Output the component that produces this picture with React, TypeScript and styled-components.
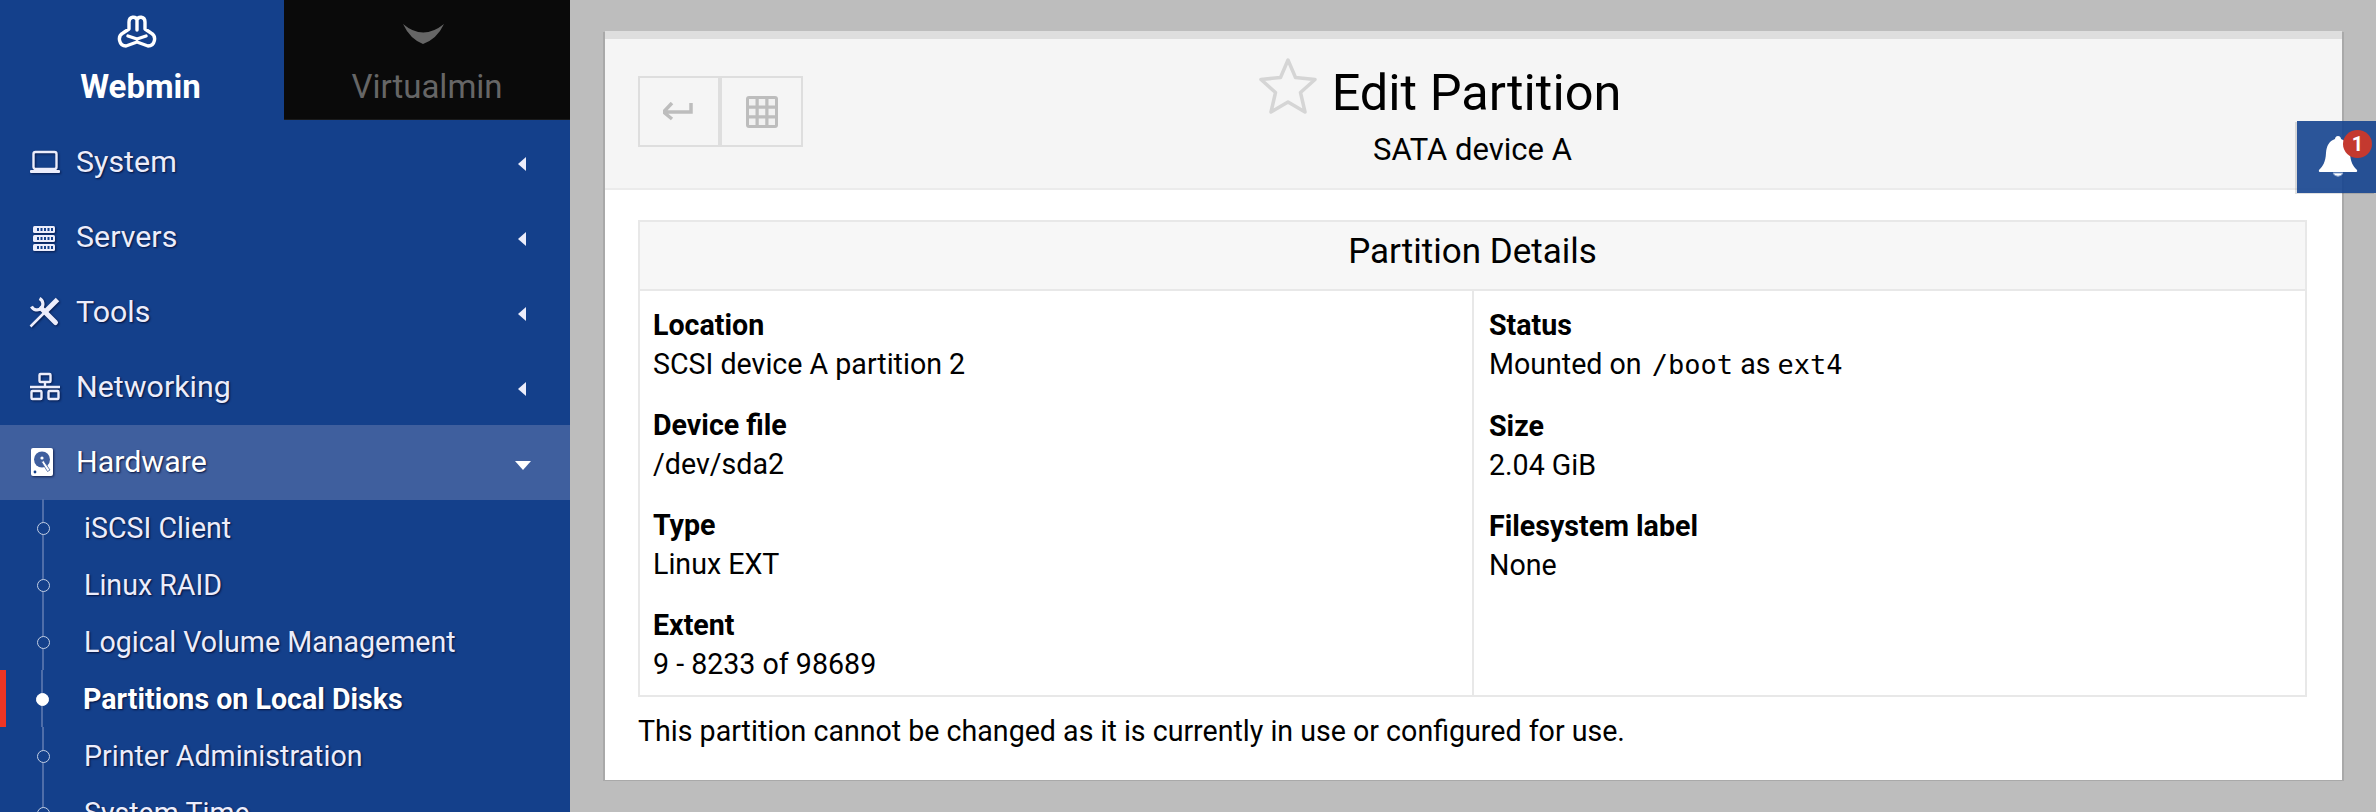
import styled, { createGlobalStyle } from "styled-components";
import { ReactNode } from "react";

const GlobalStyle = createGlobalStyle`
    html, body {
        margin: 0;
        height: 100%;
        background: #bdbdbd;
        overflow: hidden;
    }
    * {
        box-sizing: border-box;
    }
`;

const Page = styled.div`
    position: relative;
    display: flex;
    width: 2376px;
    height: 812px;
    overflow: hidden;
    background: #bdbdbd;
    font-family: Roboto, "Liberation Sans", sans-serif;
    color: #000;
`;

const Sidebar = styled.aside`
    flex: none;
    width: 570px;
    height: 812px;
    overflow: hidden;
    background: #14408b;
`;

const Tabs = styled.div`
    display: grid;
    grid-template-columns: 284px 286px;
    height: 120px;
    margin-bottom: 5px;
`;

const Tab = styled.div<{ $active?: boolean }>`
    display: flex;
    flex-direction: column;
    align-items: center;
    padding-top: 15px;
    padding-right: ${(p) => (p.$active ? "3px" : "0")};
    background: ${(p) => (p.$active ? "#14408b" : "#0a0a0a")};
    color: ${(p) => (p.$active ? "#fff" : "#666")};
    border-bottom: 1px solid ${(p) => (p.$active ? "#14408b" : "#1a1a1a")};
`;

const TabIcon = styled.svg`
    display: block;
    height: 34px;
    width: 42px;
    margin-right: 8px;
    margin-bottom: 20px;
`;

const TabLabel = styled.div<{ $active?: boolean }>`
    font-size: 33px;
    line-height: 36px;
    font-weight: ${(p) => (p.$active ? 700 : 400)};
`;

const MenuRow = styled.div<{ $open?: boolean }>`
    display: flex;
    align-items: center;
    height: 75px;
    padding-left: 29px;
    padding-bottom: 2px;
    background: ${(p) => (p.$open ? "#3f5f9e" : "transparent")};
    color: ${(p) => (p.$open ? "#fff" : "#ecedfb")};
    font-size: 30.4px;
    text-shadow: 1px 1px 2px rgba(0, 10, 50, 0.9);
`;

const MenuIcon = styled.svg`
    flex: none;
    width: 32px;
    height: 32px;
    margin-right: 15px;
    filter: drop-shadow(1px 1px 1px rgba(0, 10, 50, 0.7));
`;

const MenuLabel = styled.span`
    flex: 1;
`;

const CaretLeft = styled.span`
    width: 0;
    height: 0;
    margin-right: 44px;
    margin-top: 5px;
    border-top: 7px solid transparent;
    border-bottom: 7px solid transparent;
    border-right: 8px solid #ecedfb;
`;

const CaretDown = styled.span`
    width: 0;
    height: 0;
    margin-right: 39px;
    margin-top: 8px;
    border-left: 8px solid transparent;
    border-right: 8px solid transparent;
    border-top: 9px solid #fff;
`;

const SubList = styled.div`
    margin-top: -1px;
`;

const SubRow = styled.div<{ $active?: boolean }>`
    display: flex;
    align-items: center;
    height: 57px;
    padding-left: 37px;
    color: ${(p) => (p.$active ? "#fff" : "#ecedfb")};
    font-size: 28.6px;
    font-weight: ${(p) => (p.$active ? 700 : 400)};
    text-shadow: 1px 1px 2px rgba(0, 10, 50, 0.9);
    box-shadow: ${(p) => (p.$active ? "inset 6px 0 0 #ee3524" : "none")};
`;

const Bullet = styled.span<{ $active?: boolean }>`
    position: relative;
    flex: none;
    width: 11px;
    height: 57px;
    margin-right: 36px;
    margin-left: ${(p) => (p.$active ? "-1px" : "0")};

    &::before {
        content: "";
        position: absolute;
        left: 5px;
        top: 0;
        bottom: 0;
        width: 1.5px;
        background: #4f6ea9;
    }

    &::after {
        content: "";
        position: absolute;
        left: 0;
        top: 23px;
        width: 11px;
        height: 11px;
        border-radius: 50%;
        border: 1.5px solid ${(p) => (p.$active ? "#fff" : "#c3cfe4")};
        background: ${(p) => (p.$active ? "#fff" : "#14408b")};
    }
`;

const Main = styled.main`
    flex: 1;
    padding: 31px 34px 0 35px;
`;

const Panel = styled.section`
    height: 749px;
    background: #fff;
    border-top: 8px solid #dedede;
    box-shadow: -2px 1px 0 #a9a9a9, 2px 1px 0 #a9a9a9;
`;

const PanelHeader = styled.header`
    display: grid;
    grid-template-columns: 1fr auto 1fr;
    height: 151px;
    padding: 37px 35px 0 33px;
    background: #f5f5f5;
    border-bottom: 2px solid #ebebeb;
`;

const ButtonGroup = styled.div`
    display: flex;
    align-self: start;
    height: 71px;
`;

const HeaderButton = styled.div`
    display: flex;
    align-items: center;
    justify-content: center;
    width: 82px;
    height: 71px;
    border: 2px solid #dedede;
    & + & {
        width: 84px;
        margin-left: -1px;
        border-left-width: 3px;
    }
`;

const TitleBlock = styled.div`
    display: flex;
    flex-direction: column;
    align-items: center;
    padding-left: 8px;
    margin-top: -17px;
`;

const Heading = styled.h1`
    position: relative;
    margin: 0;
    font-size: 50.5px;
    line-height: 68px;
    font-weight: 400;
`;

const StarIcon = styled.svg`
    position: absolute;
    right: 100%;
    top: -4px;
    width: 62px;
    height: 62px;
    margin-right: 13px;
`;

const Subheading = styled.div`
    margin-top: 5px;
    margin-left: -8px;
    font-size: 31px;
    line-height: 36px;
`;

const PanelBody = styled.div`
    padding: 30px 35px 0 33px;
`;

const DetailsTable = styled.div`
    border: 2px solid #e8e8e8;
`;

const TableTitle = styled.div`
    height: 69px;
    line-height: 60px;
    text-align: center;
    font-size: 35px;
    background: #f7f7f7;
    border-bottom: 2px solid #e8e8e8;
`;

const Columns = styled.div`
    display: grid;
    grid-template-columns: 832px 1fr;
    height: 404px;
`;

const Column = styled.div`
    padding: 15px 14px 0 13px;
    & + & {
        padding-left: 15px;
        border-left: 2px solid #e8e8e8;
    }
`;

const Field = styled.div`
    margin-bottom: 22px;
    font-size: 28.6px;
    line-height: 40px;
    &:last-child {
        margin-bottom: 0;
    }
`;

const FieldLabel = styled.div`
    font-weight: 700;
    line-height: 38px;
`;

const Mono = styled.span`
    font-family: "DejaVu Sans Mono", "Liberation Mono", monospace;
    font-size: 27px;
    &:first-of-type {
        margin-left: 3px;
    }
`;

const Note = styled.p`
    margin: 14px 0 0;
    font-size: 28.6px;
    line-height: 40px;
`;

const Notifier = styled.div`
    position: absolute;
    top: 121px;
    right: 0;
    width: 79px;
    height: 72px;
    background: rgba(21, 68, 143, 0.9);
    box-shadow: -2px 1px 0 rgba(0, 0, 0, 0.12);
`;

const BellIcon = styled.svg`
    position: absolute;
    left: 21px;
    top: 14px;
    width: 40px;
    height: 43px;
`;

const Badge = styled.span`
    position: absolute;
    left: 46px;
    top: 9px;
    width: 29px;
    height: 28px;
    border-radius: 50%;
    background: #c4392f;
    color: #fff;
    font-size: 20px;
    font-weight: 700;
    line-height: 28px;
    text-align: center;
`;

function LaptopIcon() {
    return (
        <MenuIcon viewBox="0 0 32 32">
            <rect x="4.5" y="6" width="23" height="17" rx="2" fill="none" stroke="currentColor" strokeWidth="2.4" />
            <rect x="1" y="24" width="30" height="3" rx="1" fill="currentColor" />
        </MenuIcon>
    );
}

function ServersIcon() {
    const rows = [5, 14, 23];
    const cells = [8, 11.5, 15, 18.5, 22];
    return (
        <MenuIcon viewBox="0 0 32 32">
            {rows.map((y) => (
                <g key={y}>
                    <rect x="4" y={y} width="22" height="7" rx="1.5" fill="currentColor" />
                    {cells.map((x) => (
                        <rect key={x} x={x} y={y + 2} width="2" height="3" fill="#14408b" />
                    ))}
                </g>
            ))}
        </MenuIcon>
    );
}

function ToolsIcon() {
    return (
        <MenuIcon viewBox="0 0 32 32">
            <g fill="none" stroke="currentColor">
                <path d="M1.5 30.5 L15 17" strokeWidth="2.5" />
                <path d="M15 17 L28.5 3.5" strokeWidth="5" />
                <path d="M10.5 2.5 A6 6 0 1 1 2.5 10.5" strokeWidth="3.2" />
                <path d="M12.5 12.5 L26.5 26.5" strokeWidth="5" strokeLinecap="round" />
            </g>
        </MenuIcon>
    );
}

function NetworkIcon() {
    return (
        <MenuIcon viewBox="0 0 32 32">
            <g fill="none" stroke="currentColor" strokeWidth="2.4">
                <rect x="10.5" y="3" width="11" height="8" rx="1" />
                <rect x="2.5" y="20" width="10" height="8" rx="1" />
                <rect x="19.5" y="20" width="10" height="8" rx="1" />
                <path d="M16 11 V16 M1 16 H31" />
            </g>
        </MenuIcon>
    );
}

function DiskIcon() {
    return (
        <MenuIcon viewBox="0 0 32 32">
            <rect x="2" y="2" width="22" height="28" rx="2" fill="currentColor" />
            <circle cx="13" cy="13.5" r="8" fill="#3f5f9e" />
            <circle cx="13" cy="12" r="1.6" fill="#fff" />
            <path d="M12.5 16 L14.5 14.5 L21 24 L18.5 25.5 Z" fill="#fff" stroke="#3f5f9e" strokeWidth="0.8" />
            <circle cx="6" cy="26" r="1.4" fill="#14408b" />
        </MenuIcon>
    );
}

function MenuItem({ icon, label, open }: { icon: ReactNode; label: string; open?: boolean }) {
    return (
        <MenuRow $open={open}>
            {icon}
            <MenuLabel>{label}</MenuLabel>
            {open ? <CaretDown /> : <CaretLeft />}
        </MenuRow>
    );
}

const subItems = [
    "iSCSI Client",
    "Linux RAID",
    "Logical Volume Management",
    "Partitions on Local Disks",
    "Printer Administration",
    "System Time",
];

const leftFields: [string, ReactNode][] = [
    ["Location", "SCSI device A partition 2"],
    ["Device file", "/dev/sda2"],
    ["Type", "Linux EXT"],
    ["Extent", "9 - 8233 of 98689"],
];

const rightFields: [string, ReactNode][] = [
    [
        "Status",
        <>
            Mounted on <Mono>/boot</Mono> as <Mono>ext4</Mono>
        </>,
    ],
    ["Size", "2.04 GiB"],
    ["Filesystem label", "None"],
];

function App() {
    return (
        <Page>
            <GlobalStyle />
            <Sidebar>
                <Tabs>
                    <Tab $active>
                        <TabIcon viewBox="0 0 42 34">
                            <path
                                d="M13 14 V7 C13 1 20 1 21 5 C22 1 29 1 29 7 V14 L35 18 C41 21 39 31 32 31 L21 27 L10 31 C3 31 1 21 7 18 Z M21 6 V15 M12 21 L21 24 L30 21"
                                fill="none"
                                stroke="#fff"
                                strokeWidth="3.4"
                                strokeLinejoin="round"
                                strokeLinecap="round"
                            />
                        </TabIcon>
                        <TabLabel $active>Webmin</TabLabel>
                    </Tab>
                    <Tab>
                        <TabIcon viewBox="0 0 42 34">
                            <path d="M1 9 Q21 26 42 9 Q35 24 21 29 Q8 24 1 9 Z" fill="#666" />
                        </TabIcon>
                        <TabLabel>Virtualmin</TabLabel>
                    </Tab>
                </Tabs>
                <MenuItem icon={<LaptopIcon />} label="System" />
                <MenuItem icon={<ServersIcon />} label="Servers" />
                <MenuItem icon={<ToolsIcon />} label="Tools" />
                <MenuItem icon={<NetworkIcon />} label="Networking" />
                <MenuItem icon={<DiskIcon />} label="Hardware" open />
                <SubList>
                    {subItems.map((item) => {
                        const active = item === "Partitions on Local Disks";
                        return (
                            <SubRow key={item} $active={active}>
                                <Bullet $active={active} />
                                {item}
                            </SubRow>
                        );
                    })}
                </SubList>
            </Sidebar>
            <Main>
                <Panel>
                    <PanelHeader>
                        <ButtonGroup>
                            <HeaderButton>
                                <svg width="32" height="20" viewBox="2 1 32 20" fill="none" stroke="#bdbdbd" strokeWidth="3.5">
                                    <path d="M30 2 V11 H3 M11 2 L2.5 11 L11 18" />
                                </svg>
                            </HeaderButton>
                            <HeaderButton>
                                <svg width="32" height="32" viewBox="0 0 32 32">
                                    <rect width="32" height="32" rx="3" fill="#bdbdbd" />
                                    {[3, 12.75, 22.5].map((y) =>
                                        [3, 12.75, 22.5].map((x) => (
                                            <rect key={`${x}-${y}`} x={x} y={y} width="6.5" height="6.5" fill="#f1f1f1" />
                                        ))
                                    )}
                                </svg>
                            </HeaderButton>
                        </ButtonGroup>
                        <TitleBlock>
                            <Heading>
                                <StarIcon viewBox="0 0 62 62">
                                    <path
                                        d="M31 5 L38.5 22.5 L58 24.5 L43.5 37.5 L48 57 L31 47 L14 57 L18.5 37.5 L4 24.5 L23.5 22.5 Z"
                                        fill="none"
                                        stroke="#d5d5d5"
                                        strokeWidth="3.5"
                                        strokeLinejoin="round"
                                    />
                                </StarIcon>
                                Edit Partition
                            </Heading>
                            <Subheading>SATA device A</Subheading>
                        </TitleBlock>
                    </PanelHeader>
                    <PanelBody>
                        <DetailsTable>
                            <TableTitle>Partition Details</TableTitle>
                            <Columns>
                                <Column>
                                    {leftFields.map(([label, value]) => (
                                        <Field key={label}>
                                            <FieldLabel>{label}</FieldLabel>
                                            {value}
                                        </Field>
                                    ))}
                                </Column>
                                <Column>
                                    {rightFields.map(([label, value]) => (
                                        <Field key={label}>
                                            <FieldLabel>{label}</FieldLabel>
                                            {value}
                                        </Field>
                                    ))}
                                </Column>
                            </Columns>
                        </DetailsTable>
                        <Note>This partition cannot be changed as it is currently in use or configured for use.</Note>
                    </PanelBody>
                </Panel>
            </Main>
            <Notifier>
                <BellIcon viewBox="0 0 40 43">
                    <path d="M20 1 C22 1 23 2.5 23 4 C29 6 31.5 11 32 18 C32.5 27 35 31 39 35 C39.5 36.5 39 37 37.5 37 H2.5 C1 37 0.5 36.5 1 35 C5 31 7.5 27 8 18 C8.5 11 11 6 17 4 C17 2.5 18 1 20 1 Z" fill="#fff" />
                    <path d="M15 38 A5.5 5.5 0 0 0 25 38 Z" fill="#fff" stroke="#8fa8d0" strokeWidth="1" />
                </BellIcon>
                <Badge>1</Badge>
            </Notifier>
        </Page>
    );
}

export default App;
